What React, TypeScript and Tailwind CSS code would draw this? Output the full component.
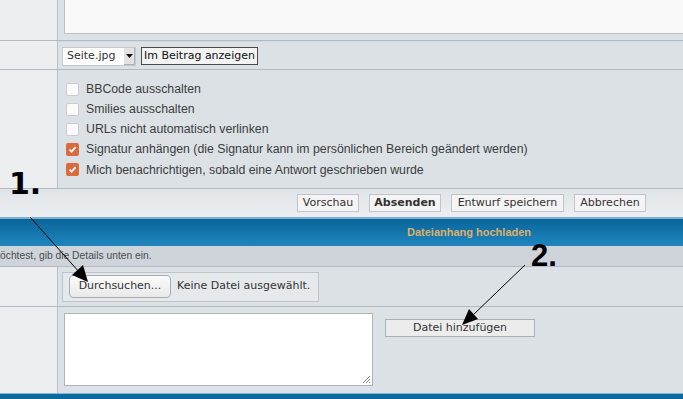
import React from "react";

const dv = { fontFamily: '"DejaVu Sans", Verdana, sans-serif' };
const ar = { fontFamily: '"Liberation Sans", Arial, sans-serif' };

function Check({ checked }: { checked?: boolean }) {
  return checked ? (
    <span className="w-[13px] h-[13px] rounded-[2px] bg-[#dd6a3d] flex items-center justify-center">
      <svg width="9" height="9" viewBox="0 0 9 9">
        <path d="M1.5 4.6 L3.6 6.7 L7.6 2.2" stroke="#fff" strokeWidth="1.8" fill="none" />
      </svg>
    </span>
  ) : (
    <span className="w-[13px] h-[13px] rounded-[2px] bg-[#fbfbfb] border border-[#c9cdd1]" />
  );
}

export default function App() {
  const opts: [boolean, string][] = [
    [false, "BBCode ausschalten"],
    [false, "Smilies ausschalten"],
    [false, "URLs nicht automatisch verlinken"],
    [true, "Signatur anhängen (die Signatur kann im persönlichen Bereich geändert werden)"],
    [true, "Mich benachrichtigen, sobald eine Antwort geschrieben wurde"],
  ];
  return (
    <div className="relative w-[683px] h-[399px] overflow-hidden bg-[#dce1e5]" style={ar}>
      {/* row 1: textarea */}
      <div className="flex h-[41px] border-b border-[#b3bac0]">
        <div className="w-[58px] bg-[#eceeef] border-r border-[#b8bfc5]" />
        <div className="flex-1 pl-[6px]">
          <div className="h-[34px] bg-[#f9f9f9] border-l border-b border-[#bcc1c5]" />
        </div>
      </div>
      {/* row 2: select */}
      <div className="flex h-[29px] border-b border-[#b3bac0]">
        <div className="w-[58px] bg-[#eceeef] border-r border-[#b8bfc5]" />
        <div className="flex-1 flex items-center pl-[4px] gap-[5px] pt-[1px] border-t border-[#d2dbe4]">
          <div className="w-[74px] h-[19px] bg-white border border-[#c5c9cc] flex items-center justify-between text-[11px] text-[#333]" style={dv}>
            <span className="pl-[4px]">Seite.jpg</span>
            <span className="w-[11px] h-[17px] bg-[#e3e3e3] flex items-center justify-center border-r border-b border-[#b0b0b0]">
              <svg width="7" height="4" viewBox="0 0 7 4"><path d="M0 0 L7 0 L3.5 4 Z" fill="#111" /></svg>
            </span>
          </div>
          <div className="h-[18px] px-[2px] border border-[#4a4a4a] bg-[#f3f3f3] flex items-center text-[11px] text-[#111]" style={dv}>
            Im Beitrag anzeigen
          </div>
        </div>
      </div>
      {/* row 3: options */}
      <div className="flex h-[119px] border-b border-[#b3bac0]">
        <div className="w-[58px] bg-[#eceeef] border-r border-[#b8bfc5]" />
        <div className="flex-1 flex flex-col pl-[8px] pt-[12px] gap-[6.2px]">
          {opts.map(([c, t]) => (
            <div key={t} className="h-[14px] flex items-center gap-[7px] text-[12.3px] text-[#3a3d40]">
              <Check checked={c} />
              <span>{t}</span>
            </div>
          ))}
        </div>
      </div>
      {/* row 4: buttons */}
      <div className="h-[28px] bg-gradient-to-b from-[#dfe4e8] to-[#eceff1] flex items-center justify-end pr-[37px] gap-[10px] text-[11px] text-[#333]" style={dv}>
        <div className="h-[18px] w-[62px] border border-[#bfc5ca] bg-[#f4f4f4] flex items-center justify-center">Vorschau</div>
        <div className="h-[18px] w-[72px] border border-[#bfc5ca] bg-[#f4f4f4] flex items-center justify-center font-bold">Absenden</div>
        <div className="h-[18px] w-[113px] border border-[#bfc5ca] bg-[#f4f4f4] flex items-center justify-center">Entwurf speichern</div>
        <div className="h-[18px] w-[72px] border border-[#bfc5ca] bg-[#f4f4f4] flex items-center justify-center">Abbrechen</div>
      </div>
      {/* blue header */}
      <div className="h-[2px] bg-[#7fb0cf]" />
      <div className="h-[27px] bg-gradient-to-b from-[#08659a] to-[#1f86bd] flex items-center pl-[407px] text-[11px] font-bold text-[#dcb06b]">
        Dateianhang hochladen
      </div>
      {/* description row */}
      <div className="h-[21px] bg-[#ced4d9] flex items-center text-[10.3px] text-[#4a4d50] border-b border-[#b3bac0]">
        öchtest, gib die Details unten ein.
      </div>
      {/* file input row */}
      <div className="flex h-[40px] border-b border-[#b3bac0]">
        <div className="w-[58px] bg-[#eceeef] border-r border-[#b8bfc5]" />
        <div className="flex-1 flex items-center pl-[4px]">
          <div className="w-[257px] h-[30px] border border-[#bcc3c9] bg-[#e6e9ec] flex items-center pl-[6px] gap-[6px] text-[11px] text-[#333]" style={dv}>
            <div className="w-[102px] h-[23px] rounded-[4px] border border-[#a9adb1] bg-gradient-to-b from-[#fbfbfb] to-[#e9e9e9] flex items-center justify-center">
              Durchsuchen...
            </div>
            <span>Keine Datei ausgewählt.</span>
          </div>
        </div>
      </div>
      {/* textarea row */}
      <div className="flex h-[86px]">
        <div className="w-[58px] bg-[#eceeef] border-r border-[#b8bfc5]" />
        <div className="flex-1 flex items-start pl-[6px] pt-[6px]">
          <div className="relative w-[309px] h-[73px] bg-white border border-[#adb3b8]">
            <svg className="absolute right-[1px] bottom-[1px]" width="10" height="10" viewBox="0 0 10 10">
              <path d="M9 2 L2 9 M9 5 L5 9 M9 8 L8 9" stroke="#888" strokeWidth="1" />
            </svg>
          </div>
          <div className="ml-[12px] mt-[6px] w-[150px] h-[18px] border border-[#a9afb4] bg-[#ececec] flex items-center justify-center text-[11px] text-[#333]" style={dv}>
            Datei hinzufügen
          </div>
        </div>
      </div>
      <div className="h-[1px] bg-[#8fb4cc]" />
      <div className="h-[6px] bg-[#0b6a9e]" />

      {/* annotations */}
      <svg className="absolute inset-0 pointer-events-none" width="683" height="399">
        <line x1="30" y1="217" x2="80" y2="273" stroke="#000" strokeWidth="1" />
        <polygon points="88,282 72,275 83,265" fill="#000" />
        <line x1="525" y1="265" x2="472" y2="316" stroke="#000" strokeWidth="1" />
        <polygon points="462,325 469,309 478,319" fill="#000" />
      </svg>
      <div className="absolute left-[9px] top-[167px] text-[30px] leading-[34px] font-bold text-black" style={{ fontFamily: '"DejaVu Sans", sans-serif' }}>
        1.
      </div>
      <div className="absolute left-[531px] top-[238px] text-[31px] leading-[36px] font-bold text-black">
        2.
      </div>
    </div>
  );
}
